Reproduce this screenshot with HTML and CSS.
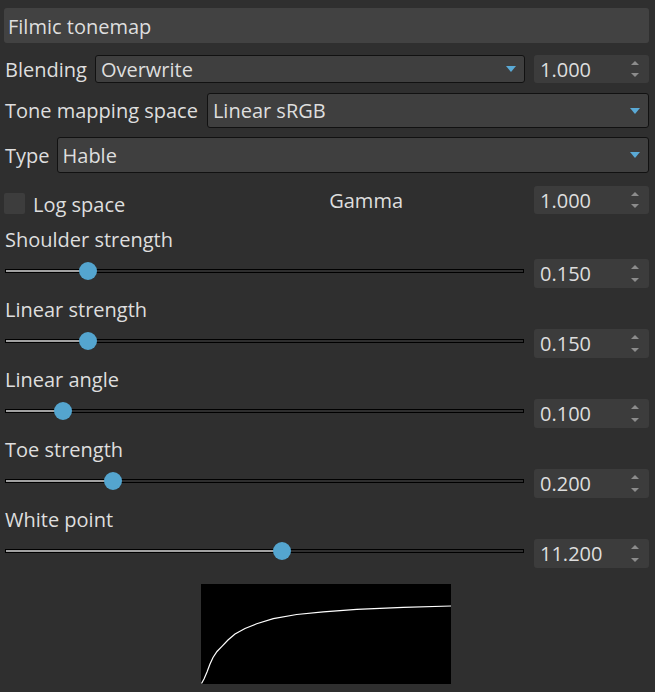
FILE: index.html
```html
<!DOCTYPE html>
<html>
<head>
<meta charset="utf-8">
<link rel="stylesheet" href="styles.css">
</head>
<body>
<div class="panel">
  <div class="title">Filmic tonemap</div>

  <div class="row row-blend">
    <span class="label">Blending</span>
    <div class="combo"><span>Overwrite</span><i class="arrow"></i></div>
    <div class="spin"><span>1.000</span><i class="up"></i><i class="down"></i></div>
  </div>

  <div class="row row-tone">
    <span class="label">Tone mapping space</span>
    <div class="combo"><span>Linear sRGB</span><i class="arrow"></i></div>
  </div>

  <div class="row row-type">
    <span class="label">Type</span>
    <div class="combo"><span>Hable</span><i class="arrow"></i></div>
  </div>

  <div class="row row-log">
    <div class="check"></div>
    <span class="label log">Log space</span>
    <span class="gamma">Gamma</span>
    <div class="spin"><span>1.000</span><i class="up"></i><i class="down"></i></div>
  </div>

  <div class="block first">
    <div class="blabel">Shoulder strength</div>
    <div class="srow">
      <div class="slider"><div class="track"><div class="fill" style="width:83px"></div></div><div class="handle" style="left:83px"></div></div>
      <div class="spin"><span>0.150</span><i class="up"></i><i class="down"></i></div>
    </div>
  </div>

  <div class="block">
    <div class="blabel">Linear strength</div>
    <div class="srow">
      <div class="slider"><div class="track"><div class="fill" style="width:83px"></div></div><div class="handle" style="left:83px"></div></div>
      <div class="spin"><span>0.150</span><i class="up"></i><i class="down"></i></div>
    </div>
  </div>

  <div class="block">
    <div class="blabel">Linear angle</div>
    <div class="srow">
      <div class="slider"><div class="track"><div class="fill" style="width:58px"></div></div><div class="handle" style="left:58px"></div></div>
      <div class="spin"><span>0.100</span><i class="up"></i><i class="down"></i></div>
    </div>
  </div>

  <div class="block">
    <div class="blabel">Toe strength</div>
    <div class="srow">
      <div class="slider"><div class="track"><div class="fill" style="width:108px"></div></div><div class="handle" style="left:108px"></div></div>
      <div class="spin"><span>0.200</span><i class="up"></i><i class="down"></i></div>
    </div>
  </div>

  <div class="block">
    <div class="blabel">White point</div>
    <div class="srow">
      <div class="slider"><div class="track"><div class="fill" style="width:277px"></div></div><div class="handle" style="left:277px"></div></div>
      <div class="spin"><span>11.200</span><i class="up"></i><i class="down"></i></div>
    </div>
  </div>

  <div class="curvewrap">
    <svg class="curve" width="250" height="100" viewBox="0 0 250 100">
      <rect width="250" height="100" fill="#000"/>
      <polyline fill="none" stroke="#fff" stroke-width="1.2" points="0.5,99.5 3,95 6,88 9,80 12,73.5 16,67.5 20.7,62.7 27,56 34,50 44,44.5 55.7,39.8 72.3,34.6 95.7,30.5 122.3,27.8 155.7,25.3 202.3,23.3 250,22"/>
    </svg>
  </div>
</div>
</body>
</html>
```

FILE: styles.css
```css
* { box-sizing: border-box; }
html, body {
  margin: 0;
  padding: 0;
  background: #2f2f2f;
  height: 100%;
  overflow: hidden;
}
body {
  font-family: "Open Sans", "Noto Sans", "DejaVu Sans", sans-serif;
  font-size: 20px;
  color: #dedede;
}
.panel {
  padding: 8px 6px 0 4px;
  display: flex;
  flex-direction: column;
}
.title {
  height: 35px;
  background: #424242;
  border-radius: 3px;
  padding-left: 4px;
  padding-top: 1px;
  display: flex;
  align-items: center;
}
.row {
  display: flex;
  align-items: center;
}
.label {
  padding-left: 1px;
  white-space: nowrap;
}
.row-blend { margin-top: 12px; height: 28px; }
.row-tone { margin-top: 10px; height: 35px; }
.row-type { margin-top: 9px; height: 36px; }
.row-log { margin-top: 13px; height: 28px; }

.combo {
  flex: 1;
  height: 100%;
  background: #3f3f3f;
  border: 1px solid #111;
  border-radius: 3px;
  display: flex;
  align-items: center;
  padding-left: 5px;
  padding-right: 8px;
}
.combo span { flex: 1; }
.row-blend .combo { margin-left: 8px; margin-right: 9px; }
.row-tone .combo { margin-left: 9px; }
.row-type .combo { margin-left: 7px; }
.arrow {
  width: 0; height: 0;
  border-left: 5px solid transparent;
  border-right: 5px solid transparent;
  border-top: 6px solid #5aaad6;
}
.spin {
  height: 28px;
  margin-left: auto;
  background: #3c3c3c;
  border-radius: 3px;
  position: relative;
  display: flex;
  align-items: center;
  padding-left: 6px;
  flex: 0 0 115px;
}
.spin .up, .spin .down {
  position: absolute;
  right: 10px;
  width: 0; height: 0;
  border-left: 4px solid transparent;
  border-right: 4px solid transparent;
}
.spin .up { top: 6px; border-bottom: 4px solid #8c8c8c; }
.spin .down { bottom: 6px; border-top: 4px solid #8c8c8c; }

.check {
  width: 21px;
  height: 21px;
  background: #3d3d3d;
  border-radius: 2px;
  align-self: flex-end;
}
.log { margin-left: 7px; align-self: flex-end; line-height: 22px; position: relative; top: 2px; }
.gamma { margin-left: 204px; }

.block { display: flex; flex-direction: column; margin-top: 10px; }
.block.first { margin-top: 14px; }
.blabel { height: 24px; line-height: 24px; padding-left: 1px; }
.srow {
  display: flex;
  margin-top: 7px;
  height: 29px;
}
.srow .spin { height: 29px; }
.slider {
  position: relative;
  width: 519px;
  margin-left: 1px;
  height: 29px;
}
.track {
  position: absolute;
  left: 0;
  right: 0;
  top: 10px;
  height: 4px;
  border: 1px solid #000;
  background: #2f2f2f;
}
.fill {
  height: 100%;
  background: #a2a2a2;
}
.handle {
  position: absolute;
  top: 3px;
  width: 18px;
  height: 18px;
  margin-left: -9px;
  border-radius: 50%;
  background: #54a5cf;
}
.curvewrap {
  margin-top: 16px;
  padding-left: 197px;
}
.curve { display: block; }
```
